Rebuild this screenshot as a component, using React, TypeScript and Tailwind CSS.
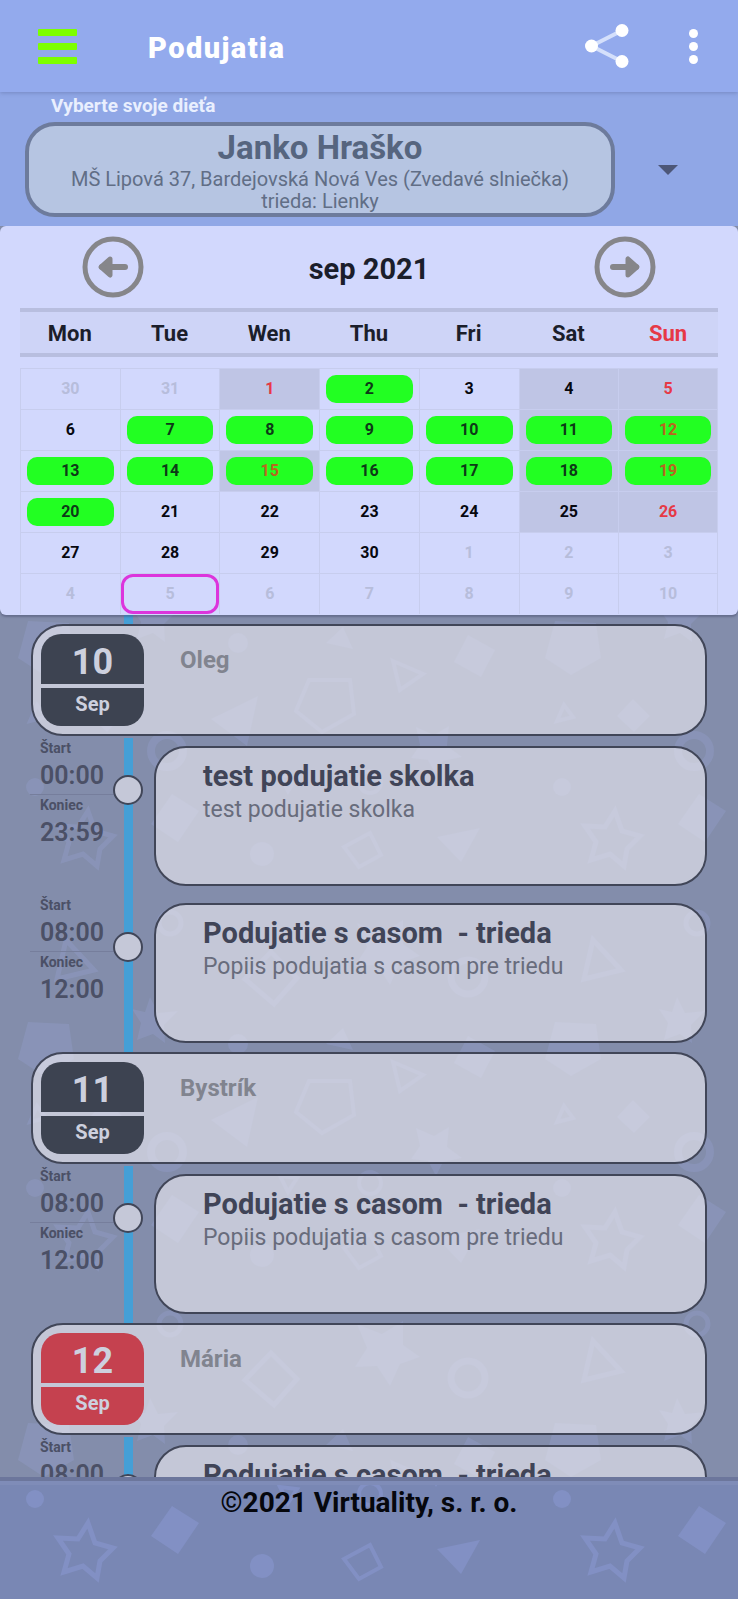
import { useState } from "react";
import clsx from "clsx";

const WEEKDAYS = ["Mon", "Tue", "Wen", "Thu", "Fri", "Sat", "Sun"];

const WEEKS = [
  [30, 31, 1, 2, 3, 4, 5],
  [6, 7, 8, 9, 10, 11, 12],
  [13, 14, 15, 16, 17, 18, 19],
  [20, 21, 22, 23, 24, 25, 26],
  [27, 28, 29, 30, 1, 2, 3],
  [4, 5, 6, 7, 8, 9, 10],
];

const HOLIDAYS = [1, 15];
const EVENT_DAYS = [2, 7, 8, 9, 10, 11, 12, 13, 14, 15, 16, 17, 18, 19, 20];

type EventItem = { start: string; end: string; title: string; text: string };
type Day = { day: number; month: string; name: string; sunday?: boolean; events: EventItem[] };

const classEvent: EventItem = {
  start: "08:00",
  end: "12:00",
  title: "Podujatie s casom  - trieda",
  text: "Popiis podujatia s casom pre triedu",
};

const DAYS: Day[] = [
  {
    day: 10,
    month: "Sep",
    name: "Oleg",
    events: [
      { start: "00:00", end: "23:59", title: "test podujatie skolka", text: "test podujatie skolka" },
      classEvent,
    ],
  },
  { day: 11, month: "Sep", name: "Bystrík", events: [classEvent] },
  { day: 12, month: "Sep", name: "Mária", sunday: true, events: [classEvent] },
];

// wallpaper tile, repeated every 527 x 401
function Shapes({ id, top, className }: { id: string; top: number; className: string }) {
  const cols = [-527, 0, 527, 1054, 1581];
  const rows = [-401, 0, 401, 802, 1203];
  return (
    <svg className={clsx("pointer-events-none absolute inset-0 h-full w-full", className)} aria-hidden="true">
      <defs>
        <g id={id}>
          <g fill="currentColor">
            <path d="M28 6 69 8 74 43 44 60 18 43Z" />
            <path d="M150-19 158-3 178-5 164 9 165 27 153 18 137 24 141 7 132-7 145-4Z" />
            <circle cx="238" cy="28" r="10" />
            <path d="M343 12 326 28 353 34Z" />
            <path d="M258 81 211 104 247 131Z" />
            <path d="M468 20 495 35 481 62 454 47Z" />
            <path d="M106 84 123 101 107 117 90 101Z" />
            <path d="M416 112 434 120 449 111 447 131 462 142 443 146 436 160 428 145 411 143 420 130Z" />
            <circle cx="35" cy="172" r="9" />
            <path d="M172 179 199 196 178 227 151 209Z" />
            <circle cx="262" cy="239" r="12" />
            <path d="M437 222 480 213 461 247Z" />
            <path d="M403 305 403 329 420 341 400 348 390 370 377 350 355 351 367 332 357 308 382 318Z" />
          </g>
          <g fill="none" stroke="currentColor" strokeWidth="4">
            <path d="M309 65H350L354 99 322 117 296 96Z" />
            <path d="M393 46 423 59 400 75Z" />
            <path d="M37 90 46 102 30 106Z" />
            <path d="M344 232 370 218 381 240 359 252Z" />
            <path d="M66 325 94 355 57 364Z" strokeWidth="5" />
            <path d="M271 337 297 363 274 389 245 364Z" strokeWidth="5" />
            <path d="M88 196 95 216 113 221 100 234 97 251 83 239 64 245 69 227 58 211 78 212Z" strokeWidth="5" />
            <circle cx="167" cy="136" r="16" strokeWidth="8" />
            <circle cx="468" cy="362" r="17" strokeWidth="7" />
            <circle cx="170" cy="308" r="11" strokeWidth="5" />
            <circle cx="370" cy="167" r="11" />
            <path d="M280 160 297 162 288 176Z" />
          </g>
        </g>
      </defs>
      {rows.map((y) => cols.map((x) => <use key={`${x}:${y}`} href={`#${id}`} x={x} y={y + top} />))}
    </svg>
  );
}

function ArrowButton({ label, flip }: { label: string; flip?: boolean }) {
  return (
    <button type="button" aria-label={label} className="size-[62px]">
      <svg
        viewBox="0 0 62 62"
        className={clsx("size-full", flip && "rotate-180")}
        fill="none"
        stroke="#86868a"
        strokeLinecap="round"
        strokeLinejoin="round"
      >
        <circle cx="31" cy="31" r="28" strokeWidth="5" />
        <path d="M43 31H20" strokeWidth="6" />
        <path d="M28 23 19 31 28 39Z" fill="#86868a" strokeWidth="5" />
      </svg>
    </button>
  );
}

function AppBar() {
  return (
    <header className="relative z-10 flex h-[92px] items-center bg-[#93aaed] pr-[29px] pl-[38px] shadow-[0_1px_4px_rgba(70,80,130,0.35)]">
      <button type="button" aria-label="Menu" className="flex w-[39px] flex-col gap-[7px]">
        <span className="h-[7px] rounded-[1px] bg-[#7dff00]" />
        <span className="h-[7px] rounded-[1px] bg-[#7dff00]" />
        <span className="h-[7px] rounded-[1px] bg-[#7dff00]" />
      </button>
      <h1 className="ml-[71px] flex-1 pt-1 text-[29px] leading-8 font-black tracking-wider text-white">Podujatia</h1>
      <button type="button" aria-label="Zdieľať" className="mr-12">
        <svg width="44" height="44" viewBox="0 0 44 44">
          <path d="M37 6.500 6.500 22 37 37.500" fill="none" stroke="#d5e0fb" strokeWidth="4" />
          <g fill="#fff">
            <circle cx="37" cy="6.500" r="6.500" />
            <circle cx="6.500" cy="22" r="6.500" />
            <circle cx="37" cy="37.500" r="6.500" />
          </g>
        </svg>
      </button>
      <button type="button" aria-label="Viac" className="flex w-8 flex-col items-center gap-1">
        <span className="size-[9px] rounded-full bg-white" />
        <span className="size-[9px] rounded-full bg-white" />
        <span className="size-[9px] rounded-full bg-white" />
      </button>
    </header>
  );
}

function ChildPicker() {
  return (
    <section className="bg-[#90a7e6] pb-[9px]">
      <label htmlFor="child" className="block h-[30px] pt-1 pl-[51px] text-[19px] leading-5 font-bold text-[#e9effe]">
        Vyberte svoje dieťa
      </label>
      <div className="relative flex items-center pr-[60px] pl-[25px]">
        <div className="h-[95px] flex-1 rounded-[30px] border-4 border-[#6d7b9c] bg-[#b6c5e2] pt-0.5 text-center text-xl leading-[22px] text-[#616e86]">
          <p className="text-[33px] leading-10 font-bold text-[#56657f]">Janko Hraško</p>
          <p>MŠ Lipová 37, Bardejovská Nová Ves (Zvedavé slniečka)</p>
          <p>trieda: Lienky</p>
        </div>
        <svg width="20" height="10" viewBox="0 0 20 10" className="ml-[43px]" aria-hidden="true">
          <path d="M0 0H20L10 10Z" fill="#4d5778" />
        </svg>
        <select id="child" className="absolute inset-0 size-full opacity-0">
          <option>Janko Hraško</option>
        </select>
      </div>
    </section>
  );
}

function Calendar() {
  const [selected, setSelected] = useState("5-1");

  return (
    <section className="relative z-10 rounded-md bg-[#d2d8fd] px-5 pb-px shadow-[0_2px_2px_rgba(60,65,100,0.4)]">
      <div className="flex h-[82px] items-center justify-between px-[62px]">
        <ArrowButton label="Predchádzajúci mesiac" />
        <h2 className="pt-1 text-[29px] leading-8 font-bold text-[#1b1e2b]">sep 2021</h2>
        <ArrowButton label="Nasledujúci mesiac" flip />
      </div>
      <table className="w-full table-fixed border-separate border-spacing-0">
        <thead>
          <tr>
            {WEEKDAYS.map((d) => (
              <th
                key={d}
                className={clsx(
                  "h-[49px] border-y-4 border-[#b8bedf] bg-[#ced4f7] p-0 pt-0.5 text-[22px] leading-6 font-bold",
                  d === "Sun" ? "text-[#e63946]" : "text-[#1b1e2b]",
                )}
              >
                {d}
              </th>
            ))}
          </tr>
        </thead>
        <tbody>
          <tr aria-hidden="true">
            <td colSpan={7} className="h-[11px] p-0" />
          </tr>
          {WEEKS.map((week, w) => (
            <tr key={w}>
              {week.map((n, i) => {
                const outside = (w === 0 && n > 7) || (w > 3 && n < 20);
                const holiday = HOLIDAYS.includes(n);
                const red = !outside && (i === 6 || holiday);
                const shaded = !outside && (i > 4 || holiday);
                const event = !outside && EVENT_DAYS.includes(n);
                const key = `${w}-${i}`;
                return (
                  <td
                    key={key}
                    className={clsx(
                      "h-[41px] border-t border-l border-[#c7cdee] p-0 last:border-r",
                      shaded && "bg-[#bfc5e5]",
                    )}
                  >
                    <button
                      type="button"
                      onClick={() => setSelected(key)}
                      className={clsx(
                        "flex h-10 w-full items-center justify-center rounded-xl border-[3px] px-[3px] text-base font-bold",
                        selected === key ? "border-[#dc35dc]" : "border-transparent",
                        outside ? "text-[#b7bddb]" : red ? "text-[#e63946]" : "text-[#07080f]",
                      )}
                    >
                      <span
                        className={clsx(
                          "h-7 w-full rounded-[10px] leading-7",
                          event && "bg-[#22ff22]",
                          event && (red ? "text-[#b8661f]" : "text-[#0d3a17]"),
                        )}
                      >
                        {n}
                      </span>
                    </button>
                  </td>
                );
              })}
            </tr>
          ))}
        </tbody>
      </table>
    </section>
  );
}

function DayCard({ day }: { day: Day }) {
  const tone = day.sunday ? "bg-[#c5414f]" : "bg-[#3d4351]";
  return (
    <div className="mx-[31px] mb-0.5 flex h-28 gap-9 rounded-[32px] border-2 border-[#414658] bg-[#f0eef5]/60 p-2">
      <div className="flex h-[92px] w-[103px] flex-col gap-1 overflow-hidden rounded-[20px] text-center font-bold text-[#cdd0de]">
        <p className={clsx("h-[50px] pt-1 text-4xl leading-[48px]", tone)}>{day.day}</p>
        <p className={clsx("h-[38px] text-xl leading-8", tone)}>{day.month}</p>
      </div>
      <h3 className="pt-2.5 text-2xl leading-8 font-bold text-[#81848f]">{day.name}</h3>
    </div>
  );
}

function EventRow({ event }: { event: EventItem }) {
  return (
    <article className="flex h-[157px] pr-[31px]">
      <div className="w-[84px] shrink-0 self-start pt-0.5 pl-10 whitespace-nowrap text-[#4b5066]">
        <p className="text-sm leading-4 font-bold">Štart</p>
        <p className="pt-0.5 text-[25px] leading-9 font-semibold">{event.start}</p>
        <hr className="-ml-2.5 w-[84px] border-[#767e9c]" />
        <p className="text-sm leading-5 font-bold">Koniec</p>
        <p className="text-[25px] leading-9 font-semibold">{event.end}</p>
      </div>
      <div className="ml-[29px] flex w-[30px] shrink-0 justify-center bg-[linear-gradient(#459fd6,#459fd6)] bg-[length:9px_100%] bg-center bg-no-repeat pt-[37px]">
        <span className="size-[30px] rounded-full border-2 border-[#414658] bg-[#c5c8d8]" />
      </div>
      <div className="mt-2 ml-[11px] h-[140px] flex-1 rounded-[32px] border-2 border-[#414658] bg-[#f0eef5]/60 pt-2.5 pl-[47px]">
        <h4 className="text-[29px] leading-9 font-bold whitespace-pre text-[#404457]">{event.title}</h4>
        <p className="text-[23px] leading-8 text-[#686c7c]">{event.text}</p>
      </div>
    </article>
  );
}

export default function App() {
  return (
    <div className="flex h-screen flex-col overflow-hidden bg-[#838dab] font-[Roboto,sans-serif]">
      <AppBar />
      <ChildPicker />
      <Calendar />
      <main className="relative min-h-0 flex-1 overflow-hidden">
        <Shapes id="list-tile" top={0} className="text-[#909cc6]/45" />
        <div className="relative h-full overflow-y-auto [scrollbar-width:none]">
          <div className="ml-[124px] h-[9px] w-[9px] bg-[#459fd6]" />
          {DAYS.map((d) => (
            <section key={d.day}>
              <DayCard day={d} />
              {d.events.map((e, i) => (
                <EventRow key={i} event={e} />
              ))}
            </section>
          ))}
        </div>
      </main>
      <footer className="relative h-[122px] border-t-4 border-[#6c769c] bg-[#7987b4]">
        <Shapes id="footer-tile" top={-154} className="text-[#8290c4]" />
        <p className="relative border-t-4 border-[#7f8cb8] pt-0.5 text-center text-[28px] leading-8 font-bold text-[#06070d]">
          ©2021 Virtuality, s. r. o.
        </p>
      </footer>
    </div>
  );
}
